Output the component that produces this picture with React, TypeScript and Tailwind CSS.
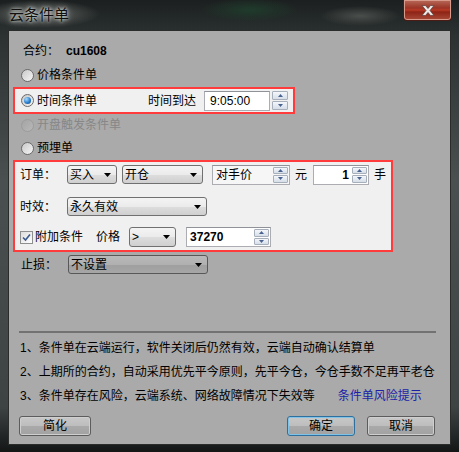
import React from "react";

function Radio({ checked, disabled }: { checked?: boolean; disabled?: boolean }) {
  return (
    <span
      className={`flex h-[13px] w-[13px] shrink-0 items-center justify-center rounded-full border ${
        disabled
          ? "border-[#9c9c9c] bg-gradient-to-br from-[#a4a4a4] to-[#b8b8b8]"
          : "border-[#6a6a6a] bg-gradient-to-br from-[#c9c9c9] to-[#f5f5f5]"
      }`}
    >
      {checked && (
        <span className="h-[7px] w-[7px] rounded-full bg-[radial-gradient(circle_at_35%_30%,#a6dcff,#2a7fd0_55%,#0c3c78)]" />
      )}
    </span>
  );
}

function Checkbox() {
  return (
    <span className="flex h-[13px] w-[13px] shrink-0 items-center justify-center border border-[#8e8f8f] bg-gradient-to-br from-[#dcdcdc] to-[#ffffff]">
      <svg width="9" height="9" viewBox="0 0 9 9">
        <path d="M1 4.5 L3.5 7 L8 1.5" fill="none" stroke="#3a5a8c" strokeWidth="1.6" />
      </svg>
    </span>
  );
}

function Arrow() {
  return (
    <svg width="7" height="4" viewBox="0 0 7 4" className="shrink-0">
      <path d="M0 0 H7 L3.5 4 Z" fill="#000" />
    </svg>
  );
}

function Select({
  label,
  className,
  dark,
}: {
  label: string;
  className: string;
  dark?: boolean;
}) {
  return (
    <div
      className={`flex items-center justify-between rounded-[3px] border pl-[2px] pr-[5px] ${
        dark
          ? "border-[#585858] bg-[linear-gradient(#b9b9b9,#b0b0b0_50%,#9f9f9f_52%,#a6a6a6)]"
          : "border-[#707070] bg-[linear-gradient(#f4f4f4,#ebebeb_50%,#dddddd_52%,#cfcfcf)]"
      } ${className}`}
    >
      <span className="text-[12px] leading-none text-black">{label}</span>
      <Arrow />
    </div>
  );
}

function SpinBtn({ up }: { up?: boolean }) {
  return (
    <div className="flex flex-1 items-center justify-center rounded-[1px] border border-[#a7afbb] bg-gradient-to-b from-[#f4f7fb] to-[#d6dee8]">
      <svg width="5" height="3" viewBox="0 0 5 3">
        <path d={up ? "M0 3 H5 L2.5 0 Z" : "M0 0 H5 L2.5 3 Z"} fill="#4a6290" />
      </svg>
    </div>
  );
}

function Spinner({ className }: { className?: string }) {
  return (
    <div className={`flex w-[16px] flex-col gap-[1px] ${className ?? ""}`}>
      <SpinBtn up />
      <SpinBtn />
    </div>
  );
}

function SpinInput({
  value,
  className,
  bold,
  right,
  muted,
}: {
  value: string;
  className: string;
  bold?: boolean;
  right?: boolean;
  muted?: boolean;
}) {
  return (
    <div
      className={`flex h-[20px] items-stretch border border-[#abadb3] border-t-[#8f9298] ${
        muted ? "bg-[#f6f6f6]" : "bg-white"
      } ${className}`}
    >
      <span
        className={`flex flex-1 items-center px-[3px] text-[12px] leading-none text-black ${
          bold ? "font-bold" : ""
        } ${right ? "justify-end" : ""}`}
      >
        {value}
      </span>
      <Spinner className="py-[1px] pr-[1px]" />
    </div>
  );
}

function Button({ label, primary, className }: { label: string; primary?: boolean; className: string }) {
  return (
    <div
      className={`flex h-[20px] items-center justify-center rounded-[3px] border bg-[linear-gradient(#c8c8c8,#bdbdbd_50%,#a9a9a9_52%,#a2a2a2)] text-[12px] leading-none text-black ${
        primary
          ? "border-[#2f6f9e] shadow-[inset_0_0_0_1px_#7fc4e8]"
          : "border-[#5c5c5c] shadow-[inset_0_0_0_1px_#cfcfcf]"
      } ${className}`}
    >
      {label}
    </div>
  );
}

export default function App() {
  return (
    <div className="h-[452px] w-[459px] overflow-hidden bg-[radial-gradient(ellipse_60px_14px_at_40px_14px,#6b6f6c,transparent),radial-gradient(ellipse_50px_12px_at_250px_10px,#1f3b2c,transparent),radial-gradient(ellipse_40px_10px_at_360px_16px,#4a4f4c,transparent),linear-gradient(#1b1f1f,#2c3131_8%,#4a4f4f_40%,#3e4343_90%,#141616)] font-['Liberation_Sans','Noto_Sans_CJK_SC',sans-serif]">
      {/* title bar */}
      <div className="flex h-[30px] items-start justify-between">
        <div className="pl-[9px] pt-[5px] text-[15px] leading-[20px] text-[#111] [text-shadow:0_0_6px_#d0d4d0,0_0_3px_#e0e4e0]">
          云条件单
        </div>
        <div className="mr-[7px] flex h-[21px] w-[49px] items-center justify-center rounded-b-[4px] border border-t-0 border-[#4a1a14] bg-[linear-gradient(#b86a5a,#9a3426_40%,#b83a26_50%,#8e2416_60%,#a84a38)] shadow-[inset_0_0_0_1px_#d89a8a]">
          <svg width="14" height="11" viewBox="0 0 14 11">
            <path
              d="M1 0.5 H4.5 L7 3.5 L9.5 0.5 H13 L9 5.5 L13 10.5 H9.5 L7 7.5 L4.5 10.5 H1 L5 5.5 Z"
              fill="#eceae8"
              stroke="#5a3a36"
              strokeWidth="0.7"
            />
          </svg>
        </div>
      </div>

      {/* client area */}
      <div className="ml-[8px] h-[415px] w-[443px] border border-[#2a2c2c] bg-[#aaaaaa] pl-[4px] text-[12px] leading-none text-black">
        <div className="mt-[10px] flex h-[20px] items-center pl-[10px]">
          <span>合约：</span>
          <span className="ml-[7px] font-bold">cu1608</span>
        </div>

        <div className="mt-[4px] flex h-[20px] items-center gap-[3px] pl-[8px]">
          <Radio />
          <span>价格条件单</span>
        </div>

        <div className="mt-[2px] flex h-[27px] w-[282px] items-center border-2 border-[#ff3b3b] bg-[#f0f0f0] pl-[6px]">
          <Radio checked />
          <span className="ml-[3px]">时间条件单</span>
          <span className="ml-[51px]">时间到达</span>
          <div className="ml-[8px] flex h-[20px] w-[66px] items-center border border-[#abadb3] border-t-[#8f9298] bg-white pl-[5px]">
            9:05:00
          </div>
          <Spinner className="ml-[2px] h-[19px]" />
        </div>

        <div className="mt-[1px] flex h-[20px] items-center gap-[3px] pl-[8px] text-[#878787]">
          <Radio disabled />
          <span>开盘触发条件单</span>
        </div>

        <div className="mt-[3px] flex h-[20px] items-center gap-[3px] pl-[8px]">
          <Radio />
          <span>预埋单</span>
        </div>

        <div className="mt-[2px] w-[380px] border-2 border-[#ff3b3b] bg-[#f0f0f0] pb-[3px] pl-[5px] pt-[3px]">
          <div className="flex h-[19px] items-center">
            <span className="w-[47px]">订单：</span>
            <Select label="买入" className="h-[19px] w-[50px]" />
            <Select label="开仓" className="ml-[5px] h-[19px] w-[81px]" />
            <SpinInput value="对手价" muted className="ml-[9px] w-[78px]" />
            <span className="ml-[5px]">元</span>
            <SpinInput value="1" bold right className="ml-[6px] w-[56px]" />
            <span className="ml-[5px]">手</span>
          </div>
          <div className="mt-[13px] flex h-[19px] items-center">
            <span className="w-[47px]">时效：</span>
            <Select label="永久有效" className="h-[19px] w-[140px]" />
          </div>
          <div className="mt-[11px] flex h-[20px] items-center">
            <Checkbox />
            <span className="ml-[2px]">附加条件</span>
            <span className="ml-[13px]">价格</span>
            <Select label=">" className="ml-[9px] h-[20px] w-[47px]" />
            <SpinInput value="37270" bold className="ml-[10px] w-[85px]" />
          </div>
        </div>

        <div className="mt-[3px] flex h-[19px] items-center pl-[8px]">
          <span className="w-[47px]">止损：</span>
          <Select dark label="不设置" className="h-[19px] w-[140px]" />
        </div>

        <div className="ml-[6px] mt-[57px] h-[2px] w-[417px] bg-[#727272]" />

        <div className="mt-[5px] flex h-[20px] items-center pl-[7px]">
          1、条件单在云端运行，软件关闭后仍然有效，云端自动确认结算单
        </div>
        <div className="mt-[4px] flex h-[20px] items-center pl-[7px]">
          2、上期所的合约，自动采用优先平今原则，先平今仓，今仓手数不足再平老仓
        </div>
        <div className="mt-[4px] flex h-[20px] items-center pl-[7px]">
          <span>3、条件单存在风险，云端系统、网络故障情况下失效等</span>
          <span className="ml-[23px] text-[#1c22a8]">条件单风险提示</span>
        </div>

        <div className="mt-[10px] flex items-center pl-[6px]">
          <Button label="简化" className="w-[72px]" />
          <Button label="确定" primary className="ml-[196px] w-[68px]" />
          <Button label="取消" className="ml-[12px] w-[68px]" />
        </div>
      </div>
    </div>
  );
}
